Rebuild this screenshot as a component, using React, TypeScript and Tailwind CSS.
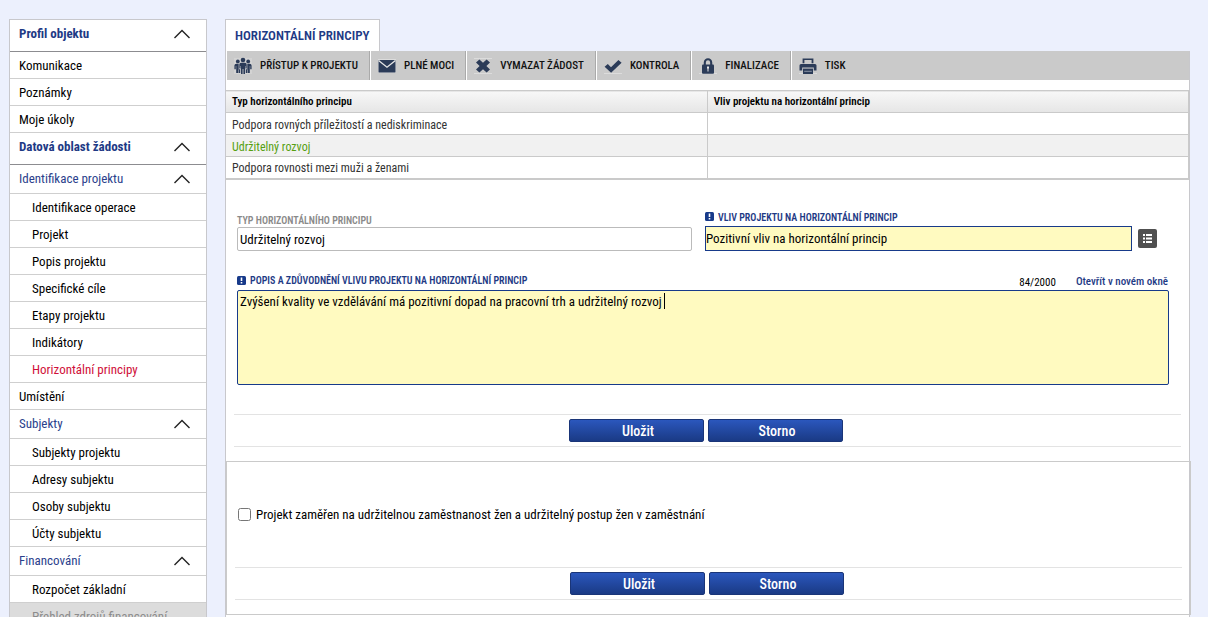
import React, { useState } from "react";

type MenuItem = {
  label: string;
  kind: "head" | "group" | "item" | "sub";
  active?: boolean;
  disabled?: boolean;
};

const menu: MenuItem[] = [
  { label: "Profil objektu", kind: "head" },
  { label: "Komunikace", kind: "item" },
  { label: "Poznámky", kind: "item" },
  { label: "Moje úkoly", kind: "item" },
  { label: "Datová oblast žádosti", kind: "head" },
  { label: "Identifikace projektu", kind: "group" },
  { label: "Identifikace operace", kind: "sub" },
  { label: "Projekt", kind: "sub" },
  { label: "Popis projektu", kind: "sub" },
  { label: "Specifické cíle", kind: "sub" },
  { label: "Etapy projektu", kind: "sub" },
  { label: "Indikátory", kind: "sub" },
  { label: "Horizontální principy", kind: "sub", active: true },
  { label: "Umístění", kind: "item" },
  { label: "Subjekty", kind: "group" },
  { label: "Subjekty projektu", kind: "sub" },
  { label: "Adresy subjektu", kind: "sub" },
  { label: "Osoby subjektu", kind: "sub" },
  { label: "Účty subjektu", kind: "sub" },
  { label: "Financování", kind: "group" },
  { label: "Rozpočet základní", kind: "sub" },
  { label: "Přehled zdrojů financování", kind: "sub", disabled: true },
];

const rows = [
  "Podpora rovných příležitostí a nediskriminace",
  "Udržitelný rozvoj",
  "Podpora rovnosti mezi muži a ženami",
];

function Chevron() {
  return (
    <svg viewBox="0 0 18 10" className="w-[18px] h-[10px]" fill="none" stroke="#222" strokeWidth="1.4">
      <path d="M1.5 9 L9 1.5 L16.5 9" />
    </svg>
  );
}

function Icon({ children }: { children: React.ReactNode }) {
  return (
    <svg viewBox="0 0 18 18" className="w-[18px] h-[18px] shrink-0" fill="#2b3b58">
      {children}
    </svg>
  );
}

const PeopleIcon = () => (
  <Icon>
    <rect y="1" width="18" height="16" fill="#d3d3d3" />
    <circle cx="9" cy="3" r="2.3" />
    <circle cx="3.8" cy="4.4" r="1.9" />
    <circle cx="14.2" cy="4.4" r="1.9" />
    <path d="M7 5.8h4q1.7 0 1.7 1.6v4.2h-1.3V9h-.4v8H9.4v-5h-.8v5H7V9h-.4v2.6H5.3V7.4Q5.3 5.8 7 5.8z" />
    <path d="M2.4 6.7h2.3v5.5h1.5V16H4.5v-3.4H4V16H2.2V9h-.4v3.2H.4V8.4q0-1.7 2-1.7z" />
    <path d="M15.6 6.7h-2.3v5.5h-1.5V16h1.7v-3.4h.5V16h1.8V9h.4v3.2h1.4V8.4q0-1.7-2-1.7z" />
  </Icon>
);

const MailIcon = () => (
  <Icon>
    <rect y="2" width="18" height="14" fill="#dcdcdc" />
    <rect x="0.5" y="3" width="17" height="12.5" rx="0.6" />
    <path d="M0.6 3.4 L9 10.2 L17.4 3.4" fill="none" stroke="#e6e6e6" strokeWidth="1.3" />
  </Icon>
);

const DeleteIcon = () => (
  <Icon>
    <path d="M0 1.5h18M0 16.5h18" stroke="#dcdcdc" />
    <path d="M5.4 2.4 L9 5.8 L12.6 2.4 L16 5.6 L12.4 9 L16 12.4 L12.6 15.6 L9 12.2 L5.4 15.6 L2 12.4 L5.6 9 L2 5.6 Z" />
  </Icon>
);

const CheckIcon = () => (
  <Icon>
    <path d="M0 16.5h18" stroke="#dcdcdc" />
    <path d="M0.6 9.8 L3.8 7 L7 10.2 L14.4 3 L17.6 5.8 L7.1 15.8 Z" />
  </Icon>
);

const LockIcon = () => (
  <Icon>
    <path d="M0 16.5h18" stroke="#dcdcdc" />
    <path d="M5.8 8.5V5.4a3.2 3.2 0 0 1 6.4 0v3.1" fill="none" stroke="#2b3b58" strokeWidth="2.1" />
    <rect x="3" y="7.6" width="12" height="9.2" rx="1" />
    <path d="M8 9.4h2v2.2h-.5v3h-1v-3H8z" fill="#e8e8e8" />
  </Icon>
);

const PrintIcon = () => (
  <Icon>
    <path d="M0 16.5h18" stroke="#dcdcdc" />
    <path d="M3.6 1.4h10.8v4.8h-1.8V3.1H5.4v3.1H3.6z" />
    <path d="M2 7h14q1.5 0 1.5 1.5v5.1h-2.7v-3H3.2v3H.5V8.5Q.5 7 2 7z" />
    <path d="M4 11.6h10V17H4z" />
    <rect x="5.2" y="13.8" width="7.6" height="1" fill="#8b95a6" />
  </Icon>
);

const tools = [
  { label: "PŘÍSTUP K PROJEKTU", icon: <PeopleIcon /> },
  { label: "PLNÉ MOCI", icon: <MailIcon /> },
  { label: "VYMAZAT ŽÁDOST", icon: <DeleteIcon /> },
  { label: "KONTROLA", icon: <CheckIcon /> },
  { label: "FINALIZACE", icon: <LockIcon /> },
  { label: "TISK", icon: <PrintIcon /> },
];

function SideMenu() {
  return (
    <nav className="w-[198px] shrink-0 self-start border border-[#c8c8cc] bg-white text-[13px] leading-7">
      {menu.map((m) => {
        if (m.kind === "head") {
          return (
            <button key={m.label} type="button" className="flex w-full h-8 items-start justify-between border-b border-[#8c8c90] pl-[9px] pr-[15px] font-bold text-[#1e3a85]">
              {m.label}
              <span className="flex h-7 items-center"><Chevron /></span>
            </button>
          );
        }
        if (m.kind === "group") {
          return (
            <button key={m.label} type="button" className="flex w-full h-[29px] items-start justify-between border-b border-[#cfcfcf] pl-[9px] pr-[15px] text-[#2b3f8c]">
              {m.label}
              <span className="flex h-7 items-center"><Chevron /></span>
            </button>
          );
        }
        const indent = m.kind === "sub" ? "pl-[22px]" : "pl-[9px]";
        const color = m.disabled ? "bg-[#dcdcdc] text-[#8c8c8c]" : m.active ? "text-[#d0103a]" : "text-black";
        return (
          <a key={m.label} href="#" className={`block h-[27px] border-b border-[#cfcfcf] ${indent} ${color}`}>
            {m.label}
          </a>
        );
      })}
    </nav>
  );
}

function Required() {
  return (
    <svg viewBox="0 0 9 9" className="w-[9px] h-[9px] shrink-0">
      <rect width="9" height="9" rx="1.5" fill="#173a8a" />
      <path d="M3.7 1.5h1.6v3.6H3.7zM3.7 6.1h1.6v1.4H3.7z" fill="#fff" />
    </svg>
  );
}

function FormButtons() {
  const cls =
    "w-[135px] h-[23px] rounded-[2px] border border-[#1a3578] bg-linear-to-b from-[#2b57bd] to-[#1a3a85] pl-1 pt-px text-sm leading-[21px] font-medium text-white";
  return (
    <div className="mx-2 flex h-[33px] items-center justify-center gap-1 border-y border-[#e3e3e3] pr-1">
      <button type="button" className={cls}>Uložit</button>
      <button type="button" className={cls}>Storno</button>
    </div>
  );
}

export default function App() {
  const [text, setText] = useState(
    "Zvýšení kvality ve vzdělávání má pozitivní dopad na pracovní trh a udržitelný rozvoj"
  );
  const [checked, setChecked] = useState(false);

  return (
    <div className="flex h-screen gap-[18px] overflow-hidden bg-[#ecf0fd] pt-[19px] pl-[9px] pr-[18px] font-['Roboto_Condensed','Roboto',sans-serif] text-[13px] text-black">
      <SideMenu />
      <main className="flex min-w-0 flex-1 flex-col">
        <div className="flex">
          <h1 className="h-8 border border-b-0 border-[#c8c8cc] bg-white px-[9px] text-[13px] leading-8 font-semibold text-[#1e3a85]">
            HORIZONTÁLNÍ PRINCIPY
          </h1>
        </div>
        <div className="flex-1 border-x border-[#c8c8cc] bg-white">
          <div className="ml-px flex h-[29px] bg-[#cacaca]">
            {tools.map((t, i) => (
              <button
                key={t.label}
                type="button"
                className={`flex items-center gap-2 pl-[7px] pr-[11px] text-[11px] font-medium text-[#111] ${i > 0 ? "border-l border-white" : ""} ${i < tools.length - 1 ? "border-r border-r-[#aaa]" : ""}`}
              >
                {t.icon}
                <span className="pt-px">{t.label}</span>
              </button>
            ))}
          </div>

          <table className="mt-[10px] w-full table-fixed border-collapse border-b-2 border-[#cacaca] text-left text-xs">
            <thead>
              <tr className="h-[22px] border-y border-[#cacaca] bg-linear-to-b from-[#f7f7f7] to-[#e6e6e6] text-[11px]">
                <th className="border-r border-[#cacaca] px-[6px] pt-[2px] font-semibold">Typ horizontálního principu</th>
                <th className="border-r border-[#cacaca] px-[6px] pt-[2px] font-semibold">Vliv projektu na horizontální princip</th>
              </tr>
            </thead>
            <tbody>
              {rows.map((r, i) => (
                <tr key={r} className={`h-[22px] border-b border-[#cacaca] ${i === 1 ? "bg-[#f1f1f1] text-[#55a010]" : "text-[#333]"}`}>
                  <td className="border-r border-[#cacaca] px-[6px] pt-[2px]">{r}</td>
                  <td className="border-r border-[#cacaca] px-[6px] pt-[2px]"></td>
                </tr>
              ))}
            </tbody>
          </table>

          <div className="mt-8 flex items-end gap-[13px] pl-[11px] pr-8">
            <div className="flex-[455] min-w-0">
              <label htmlFor="typ" className="block h-[13px] text-[10px] leading-[13px] font-semibold text-[#8a8a8a]">TYP HORIZONTÁLNÍHO PRINCIPU</label>
              <input id="typ" readOnly value="Udržitelný rozvoj" className="h-6 w-full rounded-[2px] border border-[#bbb] px-[2px] pt-px" />
            </div>
            <div className="flex-[452] min-w-0">
              <label htmlFor="vliv" className="flex h-[14px] items-start gap-1 text-[10px] leading-[11px] font-semibold text-[#1e3a85]">
                <Required />
                VLIV PROJEKTU NA HORIZONTÁLNÍ PRINCIP
              </label>
              <div className="flex items-center gap-[6px]">
                <input id="vliv" defaultValue="Pozitivní vliv na horizontální princip" className="h-[25px] min-w-0 flex-1 border border-[#173a8a] bg-[#fffac0] pt-px" />
                <button type="button" aria-label="Seznam" className="rounded-[2px] bg-[#505050]">
                  <svg viewBox="0 0 19 19" className="block w-[19px] h-[19px]" fill="#fff">
                    <path d="M5 5h2v2H5zM8 5h6v2H8zM5 8.5h2v2H5zM8 8.5h6v2H8zM5 12h2v2H5zM8 12h6v2H8z" />
                  </svg>
                </button>
              </div>
            </div>
          </div>

          <div className="mt-6 pl-[11px] pr-5">
            <div className="flex h-[15px] items-start leading-[13px]">
              <label htmlFor="popis" className="flex flex-1 items-center gap-1 text-[10px] leading-[11px] font-semibold text-[#1e3a85]">
                <Required />
                POPIS A ZDŮVODNĚNÍ VLIVU PROJEKTU NA HORIZONTÁLNÍ PRINCIP
              </label>
              <span className="mr-5 text-[11px] leading-[15px]">84/2000</span>
              <a href="#" className="mr-px text-[11px] font-medium text-[#1e3a85]">Otevřít v novém okně</a>
            </div>
            <div className="relative">
              <textarea
                id="popis"
                value={text}
                onChange={(e) => setText(e.target.value)}
                className="block h-[95px] w-full resize-none rounded-[2px] border border-[#173a8a] bg-[#fffac0] px-[2px] py-px leading-[19px] outline-none"
              />
              <span className="absolute top-[3px] left-[427px] h-4 w-px bg-black" />
            </div>
          </div>

          <div className="mt-[29px]">
            <FormButtons />
          </div>

          <section className="mt-[14px] -mr-[2px] border border-[#cacaca] pt-[46px] pb-[14px]">
            <label className="mb-[46px] ml-[11px] flex h-[13px] items-center gap-[5px]">
              <input
                type="checkbox"
                checked={checked}
                onChange={(e) => setChecked(e.target.checked)}
                className="m-0 h-[13px] w-[13px]"
              />
              <span className="pt-px">Projekt zaměřen na udržitelnou zaměstnanost žen a udržitelný postup žen v zaměstnání</span>
            </label>
            <FormButtons />
          </section>
        </div>
      </main>
    </div>
  );
}
